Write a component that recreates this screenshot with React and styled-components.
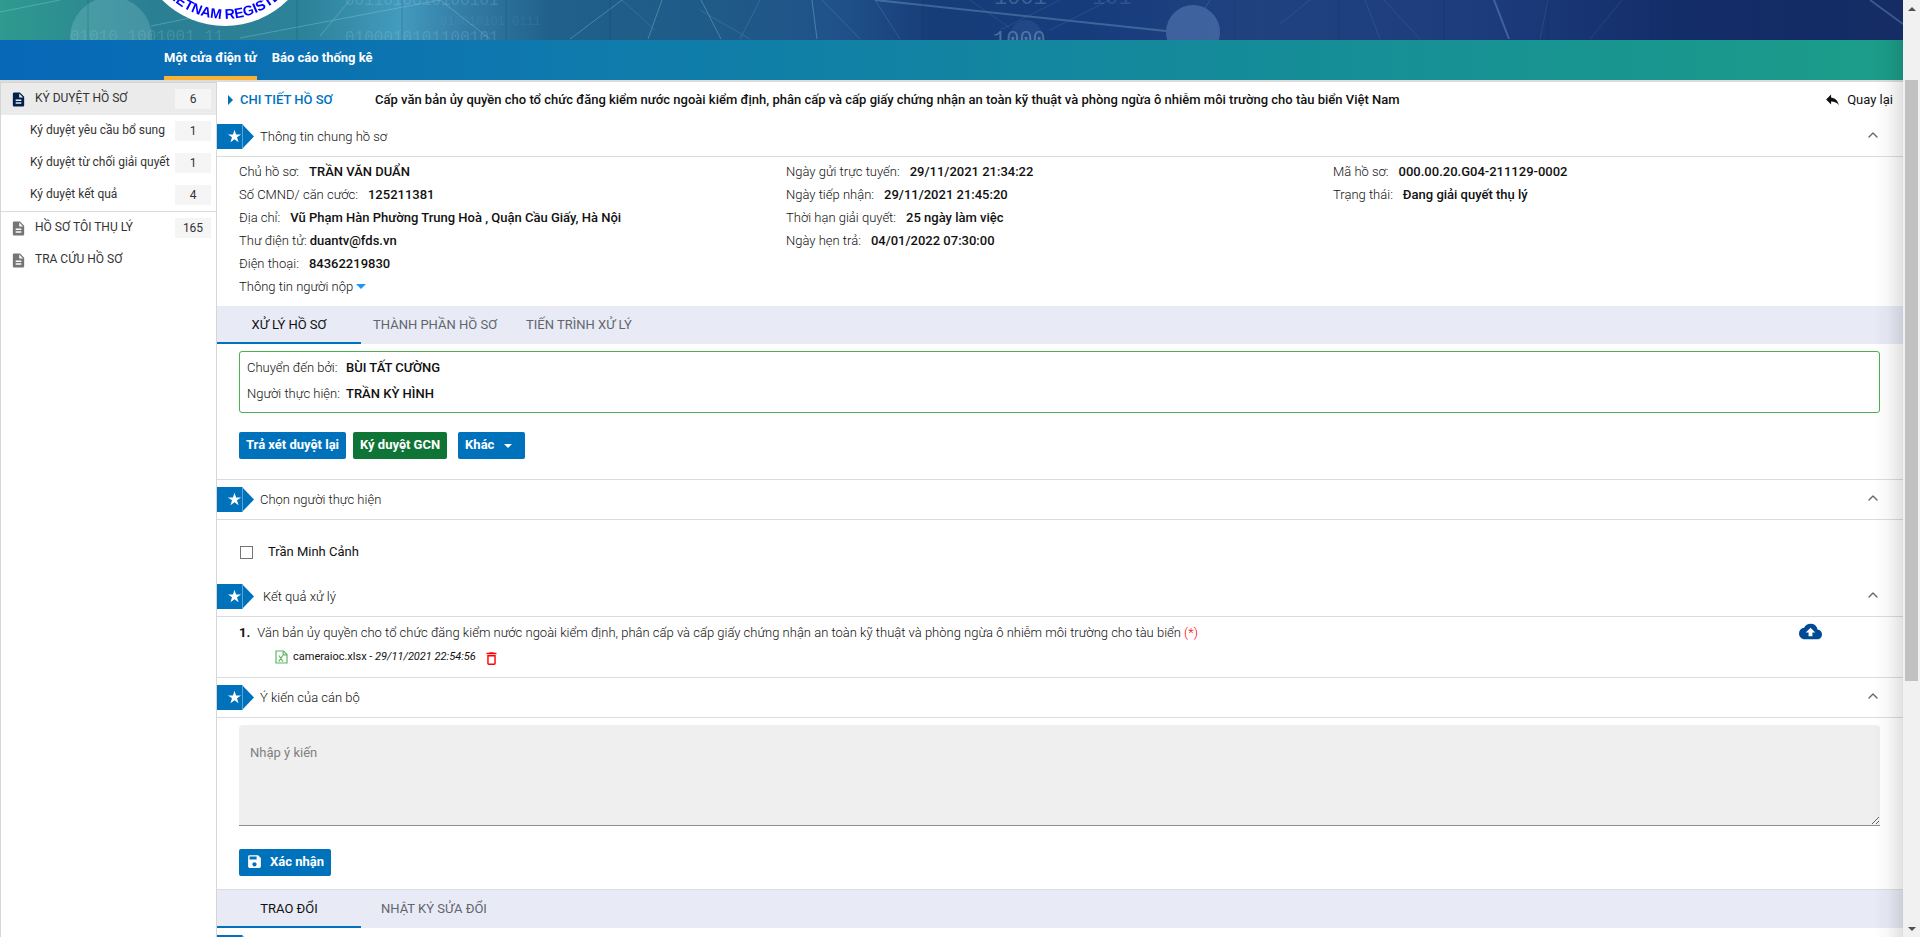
import React, { useState } from "react";
import styled, { createGlobalStyle } from "styled-components";
import { ChevronUp } from "lucide-react";
import {
  MdCloudUpload,
  MdDeleteOutline,
  MdDescription,
  MdReply,
  MdSave,
} from "react-icons/md";

const BLUE = "#0072bc";
const LINE = "#dcdcdc";

const GlobalStyle = createGlobalStyle`
  * {
    box-sizing: border-box;
  }
  body {
    margin: 0;
    background: #fff;
    color: #111;
    font-family: Roboto, "Noto Sans", sans-serif;
    font-size: 13px;
    line-height: 20px;
  }
  button, input, textarea {
    font: inherit;
  }
  a {
    color: inherit;
    text-decoration: none;
  }
`;

const Page = styled.div`
  display: flex;
  height: 100vh;
  overflow: hidden;
`;

const View = styled.div`
  flex: 1;
  min-width: 0;
  display: flex;
  flex-direction: column;
`;

const Banner = styled.header`
  height: 40px;
  overflow: hidden;
  background: linear-gradient(
    90deg,
    #2f9a8f 0%,
    #2b7f93 8%,
    #2c8299 16%,
    #439bbd 21%,
    #357fa9 24%,
    #20608a 29%,
    #1f5a88 38%,
    #205289 44%,
    #173d78 49%,
    #173c7c 57%,
    #20427f 66%,
    #1d3c7c 78%,
    #132d69 88%,
    #152c64 100%
  );
`;

const Art = styled.svg`
  display: block;
`;

const Body = styled.div`
  flex: 1;
  min-height: 0;
  display: flex;
  flex-direction: column;
  position: relative;

  &::after {
    content: "";
    position: absolute;
    top: 0;
    right: 0;
    bottom: 0;
    width: 28px;
    border-right: 1px solid rgba(0, 0, 0, 0.12);
    background: linear-gradient(90deg, rgba(0, 0, 0, 0), rgba(0, 0, 0, 0.03) 50%, rgba(0, 0, 0, 0.11));
    pointer-events: none;
  }
`;

const Nav = styled.nav`
  display: flex;
  flex: none;
  gap: 15px;
  height: 40px;
  padding-left: 164px;
  background: linear-gradient(90deg, #0768b8, #0f7bac 32%, #148a9b 62%, #1c9d89);
`;

const NavLink = styled.a`
  padding-top: 8px;
  border-bottom: 4px solid ${(props) => (props.$active ? "#f9b233" : "transparent")};
  color: #fff;
  font-weight: 700;
`;

const Columns = styled.div`
  flex: 1;
  min-height: 0;
  display: flex;
  border-top: 2px solid ${LINE};
`;

const Sidebar = styled.aside`
  flex: none;
  width: 217px;
  border: 1px solid #d6d6d6;
  border-bottom: 0;
`;

const MenuGroup = styled.div`
  & + & {
    border-top: 1px solid ${LINE};
  }
`;

const MenuItem = styled.a`
  display: flex;
  align-items: center;
  height: 32px;
  padding: 0 5px 0 ${(props) => (props.$sub ? 29 : 9)}px;
  background: ${(props) => (props.$active ? "#ebebeb" : "transparent")};
  color: #333;
  font-size: 12px;

  svg {
    flex: none;
    width: 17px;
    height: 17px;
    margin-right: 8px;
    color: ${(props) => (props.$active ? "#02204d" : "#757575")};
  }
`;

const MenuLabel = styled.span`
  flex: 1;
  padding-bottom: 2px;
  white-space: nowrap;
`;

const Count = styled.span`
  width: 36px;
  background: #f5f5f5;
  text-align: center;
`;

const Main = styled.main`
  flex: 1;
  min-width: 0;
`;

const TitleRow = styled.div`
  display: flex;
  align-items: center;
  height: 35px;
  padding: 0 10px 0 11px;
  font-weight: 500;
`;

const Triangle = styled.i`
  width: 0;
  height: 0;
  margin-right: 7px;
  border: 5px solid transparent;
  border-right: 0;
  border-left-color: ${BLUE};
`;

const TitleTag = styled.h2`
  width: 135px;
  margin: 0;
  color: ${BLUE};
  font-size: 13px;
  font-weight: 500;
`;

const TitleText = styled.h1`
  flex: 1;
  margin: 0;
  font-size: 13px;
  font-weight: 500;
`;

const BackLink = styled.a`
  display: flex;
  align-items: center;
  gap: 6px;
  font-weight: 400;
`;

const PanelHeader = styled.button`
  display: flex;
  align-items: center;
  width: 100%;
  height: ${(props) => (props.$ruled ? 41 : 40)}px;
  padding: 0 22px 0 0;
  border: 0;
  border-top: ${(props) => (props.$ruled ? `1px solid ${LINE}` : 0)};
  border-bottom: 1px solid ${LINE};
  background: none;
  color: #111;
  font-weight: 300;
  text-align: left;
  cursor: pointer;

  .chevron {
    margin-bottom: 4px;
  }
`;

const Chip = styled.span`
  display: flex;
  flex: none;
  margin-right: 6px;
  color: #fff;
`;

const ChipBody = styled.span`
  display: flex;
  align-items: center;
  justify-content: flex-end;
  width: 25px;
  height: 25px;
  background: ${BLUE};
`;

const ChipPoint = styled.span`
  width: 12px;
  height: 25px;
  background: ${BLUE};
  border-left: 1px solid #5ba3d3;
  clip-path: polygon(0 0, 100% 50%, 0 100%);
`;

const PanelTitle = styled.span`
  flex: 1;
  padding-left: ${(props) => (props.$indent ? 3 : 0)}px;
`;

const InfoGrid = styled.div`
  display: grid;
  grid-template-columns: repeat(3, 1fr);
  padding: 3px 23px 8px 22px;
`;

const Field = styled.div`
  display: flex;
  gap: ${(props) => (props.$tight ? 3 : 10)}px;
  line-height: 23px;
  font-weight: 300;

  b {
    font-weight: 500;
  }
`;

const MoreButton = styled.button`
  display: flex;
  align-items: center;
  gap: 3px;
  padding: 0;
  border: 0;
  background: none;
  color: #111;
  font-weight: 300;
  line-height: 23px;
`;

const Caret = styled.i`
  width: 0;
  height: 0;
  border: ${(props) => props.$size}px solid transparent;
  border-top-color: ${(props) => props.$color};
  border-bottom: 0;
`;

const TabBar = styled.div`
  display: flex;
  height: ${(props) => (props.$ruled ? 39 : 38)}px;
  border-top: ${(props) => (props.$ruled ? `1px solid ${LINE}` : 0)};
  background: #e8ebf6;
`;

const Tab = styled.button`
  min-width: ${(props) => (props.$active ? 144 : 0)}px;
  padding: 0 ${(props) => (props.$active ? 12 : 17)}px 0 ${(props) => (props.$wide ? 20 : 12)}px;
  border: 0;
  box-shadow: ${(props) => (props.$active ? `inset 0 -2px ${BLUE}` : "none")};
  background: none;
  color: ${(props) => (props.$active ? "#111" : "#62656c")};
`;

const Handover = styled.dl`
  display: grid;
  grid-template-columns: 99px 1fr;
  margin: 7px 23px 19px 22px;
  padding: 3px 7px 5px;
  border: 1px solid #4caf50;
  border-radius: 3px;
  line-height: 26px;

  dt {
    font-weight: 300;
  }
  dd {
    margin: 0;
    font-weight: 500;
  }
`;

const Actions = styled.div`
  display: flex;
  padding: 0 22px ${(props) => props.$bottom}px;
`;

const Button = styled.button`
  display: flex;
  align-items: center;
  gap: 7px;
  height: 27px;
  margin-right: ${(props) => props.$after || 0}px;
  padding: 0 7px 2px;
  border: 0;
  border-radius: 2px;
  background: ${(props) => (props.$green ? "#0f7536" : BLUE)};
  color: #fff;
  font-weight: 700;

  ${Caret} {
    margin: 3px 6px 0 3px;
  }
`;

const Assignee = styled.label`
  display: flex;
  align-items: center;
  gap: 15px;
  height: 57px;
  padding: 7px 22px 0;
`;

const Checkbox = styled.input`
  appearance: none;
  width: 13px;
  height: 13px;
  margin: 0 0 0 1px;
  border: 1px solid #757575;

  &:checked {
    background: ${BLUE};
  }
`;

const ResultItem = styled.div`
  display: flex;
  align-items: flex-start;
  justify-content: space-between;
  height: 60px;
  padding: 3px 81px 0 22px;
`;

const ResultTitle = styled.div`
  display: flex;
  gap: 7px;
  margin-top: 3px;
  font-weight: 300;

  b {
    font-weight: 700;
  }
`;

const Required = styled.span`
  color: #f00;
`;

const FileRow = styled.div`
  display: flex;
  align-items: center;
  gap: 5px;
  margin-top: 4px;
  padding-left: 36px;
  font-size: 11px;
`;

const IconButton = styled.button`
  display: flex;
  padding: 0;
  border: 0;
  background: none;
  color: ${(props) => props.$color};
`;

const DeleteButton = styled(IconButton)`
  margin: 2px 0 0 2px;
`;

const Comment = styled.textarea`
  display: block;
  width: calc(100% - 45px);
  height: 101px;
  margin: 7px 23px 23px 22px;
  padding: 18px 11px;
  border: 0;
  border-bottom: 1px solid #8c8c8c;
  border-radius: 4px 4px 0 0;
  background: #efefef;
  resize: vertical;

  &::placeholder {
    color: #808080;
  }
`;

const ChipRow = styled.div`
  padding-top: 7px;
`;

const Scrollbar = styled.div`
  display: flex;
  flex: none;
  flex-direction: column;
  align-items: center;
  width: 17px;
  padding: 7px 0 6px;
  background: #f1f1f1;
`;

const ScrollArrow = styled.i`
  width: 0;
  height: 0;
  border: 4px solid transparent;
  ${(props) => (props.$up ? "border-top: 0; border-bottom-color" : "border-bottom: 0; border-top-color")}: #505050;
`;

const ScrollTrack = styled.div`
  flex: 1;
  width: 13px;
  padding-top: 69px;
`;

const ScrollThumb = styled.div`
  height: 71%;
  background: #c1c1c1;
`;

const applicant = [
  ["Chủ hồ sơ:", "TRẦN VĂN DUẨN"],
  ["Số CMND/ căn cước:", "125211381"],
  ["Địa chỉ:", "Vũ Phạm Hàn Phường Trung Hoà , Quận Cầu Giấy, Hà Nội"],
  ["Thư điện tử:", "duantv@fds.vn", true],
  ["Điện thoại:", "84362219830"],
];

const dates = [
  ["Ngày gửi trực tuyến:", "29/11/2021 21:34:22"],
  ["Ngày tiếp nhận:", "29/11/2021 21:45:20"],
  ["Thời hạn giải quyết:", "25 ngày làm việc"],
  ["Ngày hẹn trả:", "04/01/2022 07:30:00"],
];

const status = [
  ["Mã hồ sơ:", "000.00.20.G04-211129-0002"],
  ["Trạng thái:", "Đang giải quyết thụ lý"],
];

function BannerArt() {
  return (
    <Art width="1903" height="40" viewBox="0 0 1903 40" aria-hidden="true">
      <g fill="#a5dbe6">
        <circle cx="111" cy="38" r="41" opacity="0.22" />
        <circle cx="1193" cy="32" r="27" fill="#7da2d8" opacity="0.35" />
        <circle cx="1026" cy="36" r="16" fill="#4a76b8" opacity="0.2" />
      </g>
      <g stroke="#9ad0e8" strokeWidth="1" opacity="0.35" fill="none">
        <path d="M0 12 60 0M151 26 240 8M240 38 440 0M440 0 490 39M320 36 350 0M570 39 622 0M648 39 662 0M701 0 721 39M812 0 817 39" />
        <path d="M622 0 655 30M740 39 760 0M822 0 860 39M875 0 900 39M700 10 750 39M1205 8 1210 0" opacity="0.5" />
        <path d="M875 0 1166 31" strokeWidth="2" opacity="0.8" />
        <path d="M1494 0 1509 39M1870 0 1903 24" strokeWidth="2" opacity="0.8" />
        <path d="M1280 24 1310 0M1365 0 1380 39M1384 0 1420 39M1540 39 1548 0M1590 39 1622 0M1000 30 1060 0M1050 30 1110 0M970 0 1010 28" opacity="0.35" />
      </g>
      <g stroke="#0b2a55" opacity="0.2">
        <path d="M88 0V40M297 0V40M402 0V40M506 0V40M610 0V40M923 0V40M1235 0V40M1339 0V40M1444 0V40M1548 0V40M1652 0V40M1757 0V40" />
      </g>
      <g fill="#a8d5e8" fontFamily="Liberation Mono" fontSize="16">
        <text x="70" y="41" opacity="0.18">01010 1001001 11</text>
        <text x="345" y="5" opacity="0.2">0011010010100101</text>
        <text x="345" y="42" opacity="0.2">0100010101100101</text>
        <text x="440" y="25" opacity="0.08" fontSize="12">010010101 0111</text>
        <text x="994" y="4" opacity="0.25" fontSize="22">1001</text>
        <text x="1092" y="4" opacity="0.15" fontSize="22">101</text>
        <text x="993" y="46" opacity="0.35" fontSize="22">1000</text>
      </g>
      <circle cx="225" cy="-63" r="89" fill="#fff" />
      <path id="sealArc" d="M143 -63A82 82 0 0 0 307 -63" fill="none" />
      <text fill="#00f" fontFamily="Liberation Sans" fontSize="14" fontWeight="700">
        <textPath href="#sealArc" startOffset="51%" textAnchor="middle">
          VIETNAM REGISTER
        </textPath>
      </text>
    </Art>
  );
}

function StarIcon() {
  return (
    <svg width="15" height="15" viewBox="0 0 24 24" fill="currentColor">
      <path d="M12 1 14.5 8.6H22.5L16 13.3 18.5 21 12 16.2 5.5 21 8 13.3 1.5 8.6H9.5Z" />
    </svg>
  );
}

function PanelChip() {
  return (
    <Chip>
      <ChipBody>
        <StarIcon />
      </ChipBody>
      <ChipPoint />
    </Chip>
  );
}

function Panel({ title, ruled, indent, children }) {
  const [open, setOpen] = useState(true);
  return (
    <section>
      <PanelHeader type="button" $ruled={ruled} aria-expanded={open} onClick={() => setOpen(!open)}>
        <PanelChip />
        <PanelTitle $indent={indent}>{title}</PanelTitle>
        <ChevronUp className="chevron" size={16} strokeWidth={2} color="#666" />
      </PanelHeader>
      {open && children}
    </section>
  );
}

function Fields({ items, children }) {
  return (
    <div>
      {items.map(([label, value, tight]) => (
        <Field key={label} $tight={tight}>
          <span>{label}</span>
          <b>{value}</b>
        </Field>
      ))}
      {children}
    </div>
  );
}

function ExcelIcon() {
  return (
    <svg width="13" height="14" viewBox="0 0 13 14" fill="none" stroke="#5fb563" strokeWidth="1.2">
      <path d="M1 1H8.5L12 4.5V13H1Z" />
      <path d="M8.2 1V4.8H12M4 5.5 7.5 11M7.8 5.5 4 11M3.5 11H5M6.8 11H8.4" />
    </svg>
  );
}

function App() {
  return (
    <Page>
      <GlobalStyle />
      <View>
        <Banner>
          <BannerArt />
        </Banner>
        <Body>
          <Nav>
            <NavLink href="#" $active>Một cửa điện tử</NavLink>
            <NavLink href="#">Báo cáo thống kê</NavLink>
          </Nav>
          <Columns>
            <Sidebar>
              <MenuGroup>
                <MenuItem href="#" $active>
                  <MdDescription />
                  <MenuLabel>KÝ DUYỆT HỒ SƠ</MenuLabel>
                  <Count>6</Count>
                </MenuItem>
                <MenuItem href="#" $sub>
                  <MenuLabel>Ký duyệt yêu cầu bổ sung</MenuLabel>
                  <Count>1</Count>
                </MenuItem>
                <MenuItem href="#" $sub>
                  <MenuLabel>Ký duyệt từ chối giải quyết</MenuLabel>
                  <Count>1</Count>
                </MenuItem>
                <MenuItem href="#" $sub>
                  <MenuLabel>Ký duyệt kết quả</MenuLabel>
                  <Count>4</Count>
                </MenuItem>
              </MenuGroup>
              <MenuGroup>
                <MenuItem href="#">
                  <MdDescription />
                  <MenuLabel>HỒ SƠ TÔI THỤ LÝ</MenuLabel>
                  <Count>165</Count>
                </MenuItem>
                <MenuItem href="#">
                  <MdDescription />
                  <MenuLabel>TRA CỨU HỒ SƠ</MenuLabel>
                </MenuItem>
              </MenuGroup>
            </Sidebar>
            <Main>
              <TitleRow>
                <Triangle />
                <TitleTag>CHI TIẾT HỒ SƠ</TitleTag>
                <TitleText>
                  Cấp văn bản ủy quyền cho tổ chức đăng kiểm nước ngoài kiểm định, phân cấp và cấp giấy chứng nhận an
                  toàn kỹ thuật và phòng ngừa ô nhiễm môi trường cho tàu biển Việt Nam
                </TitleText>
                <BackLink href="#">
                  <MdReply size={17} />
                  Quay lại
                </BackLink>
              </TitleRow>

              <Panel title="Thông tin chung hồ sơ">
                <InfoGrid>
                  <Fields items={applicant}>
                    <MoreButton type="button">
                      Thông tin người nộp
                      <Caret $size={5} $color="#2196f3" />
                    </MoreButton>
                  </Fields>
                  <Fields items={dates} />
                  <Fields items={status} />
                </InfoGrid>
              </Panel>

              <TabBar role="tablist">
                <Tab type="button" role="tab" $active>XỬ LÝ HỒ SƠ</Tab>
                <Tab type="button" role="tab">THÀNH PHẦN HỒ SƠ</Tab>
                <Tab type="button" role="tab">TIẾN TRÌNH XỬ LÝ</Tab>
              </TabBar>

              <Handover>
                <dt>Chuyển đến bởi:</dt>
                <dd>BÙI TẤT CƯỜNG</dd>
                <dt>Người thực hiện:</dt>
                <dd>TRẦN KỲ HÌNH</dd>
              </Handover>

              <Actions $bottom={20}>
                <Button type="button" $after={7}>Trả xét duyệt lại</Button>
                <Button type="button" $green $after={11}>Ký duyệt GCN</Button>
                <Button type="button">
                  Khác
                  <Caret $size={4} $color="#fff" />
                </Button>
              </Actions>

              <Panel title="Chọn người thực hiện" ruled>
                <Assignee>
                  <Checkbox type="checkbox" />
                  Trần Minh Cảnh
                </Assignee>
              </Panel>

              <Panel title="Kết quả xử lý" indent>
                <ResultItem>
                  <div>
                    <ResultTitle>
                      <b>1.</b>
                      <span>
                        Văn bản ủy quyền cho tổ chức đăng kiểm nước ngoài kiểm định, phân cấp và cấp giấy chứng nhận an
                        toàn kỹ thuật và phòng ngừa ô nhiễm môi trường cho tàu biển <Required>(*)</Required>
                      </span>
                    </ResultTitle>
                    <FileRow>
                      <ExcelIcon />
                      <span>
                        cameraioc.xlsx - <i>29/11/2021 22:54:56</i>
                      </span>
                      <DeleteButton type="button" $color="#f00" aria-label="Xóa">
                        <MdDeleteOutline size={17} />
                      </DeleteButton>
                    </FileRow>
                  </div>
                  <IconButton type="button" $color="#014a94" aria-label="Tải lên">
                    <MdCloudUpload size={23} />
                  </IconButton>
                </ResultItem>
              </Panel>

              <Panel title="Ý kiến của cán bộ" ruled>
                <Comment aria-label="Ý kiến của cán bộ" placeholder="Nhập ý kiến" />
                <Actions $bottom={13}>
                  <Button type="button">
                    <MdSave size={17} />
                    Xác nhận
                  </Button>
                </Actions>
              </Panel>

              <TabBar role="tablist" $ruled>
                <Tab type="button" role="tab" $active>TRAO ĐỔI</Tab>
                <Tab type="button" role="tab" $wide>NHẬT KÝ SỬA ĐỔI</Tab>
              </TabBar>
              <ChipRow>
                <PanelChip />
              </ChipRow>
            </Main>
          </Columns>
        </Body>
      </View>
      <Scrollbar aria-hidden="true">
        <ScrollArrow $up />
        <ScrollTrack>
          <ScrollThumb />
        </ScrollTrack>
        <ScrollArrow />
      </Scrollbar>
    </Page>
  );
}

export default App;
